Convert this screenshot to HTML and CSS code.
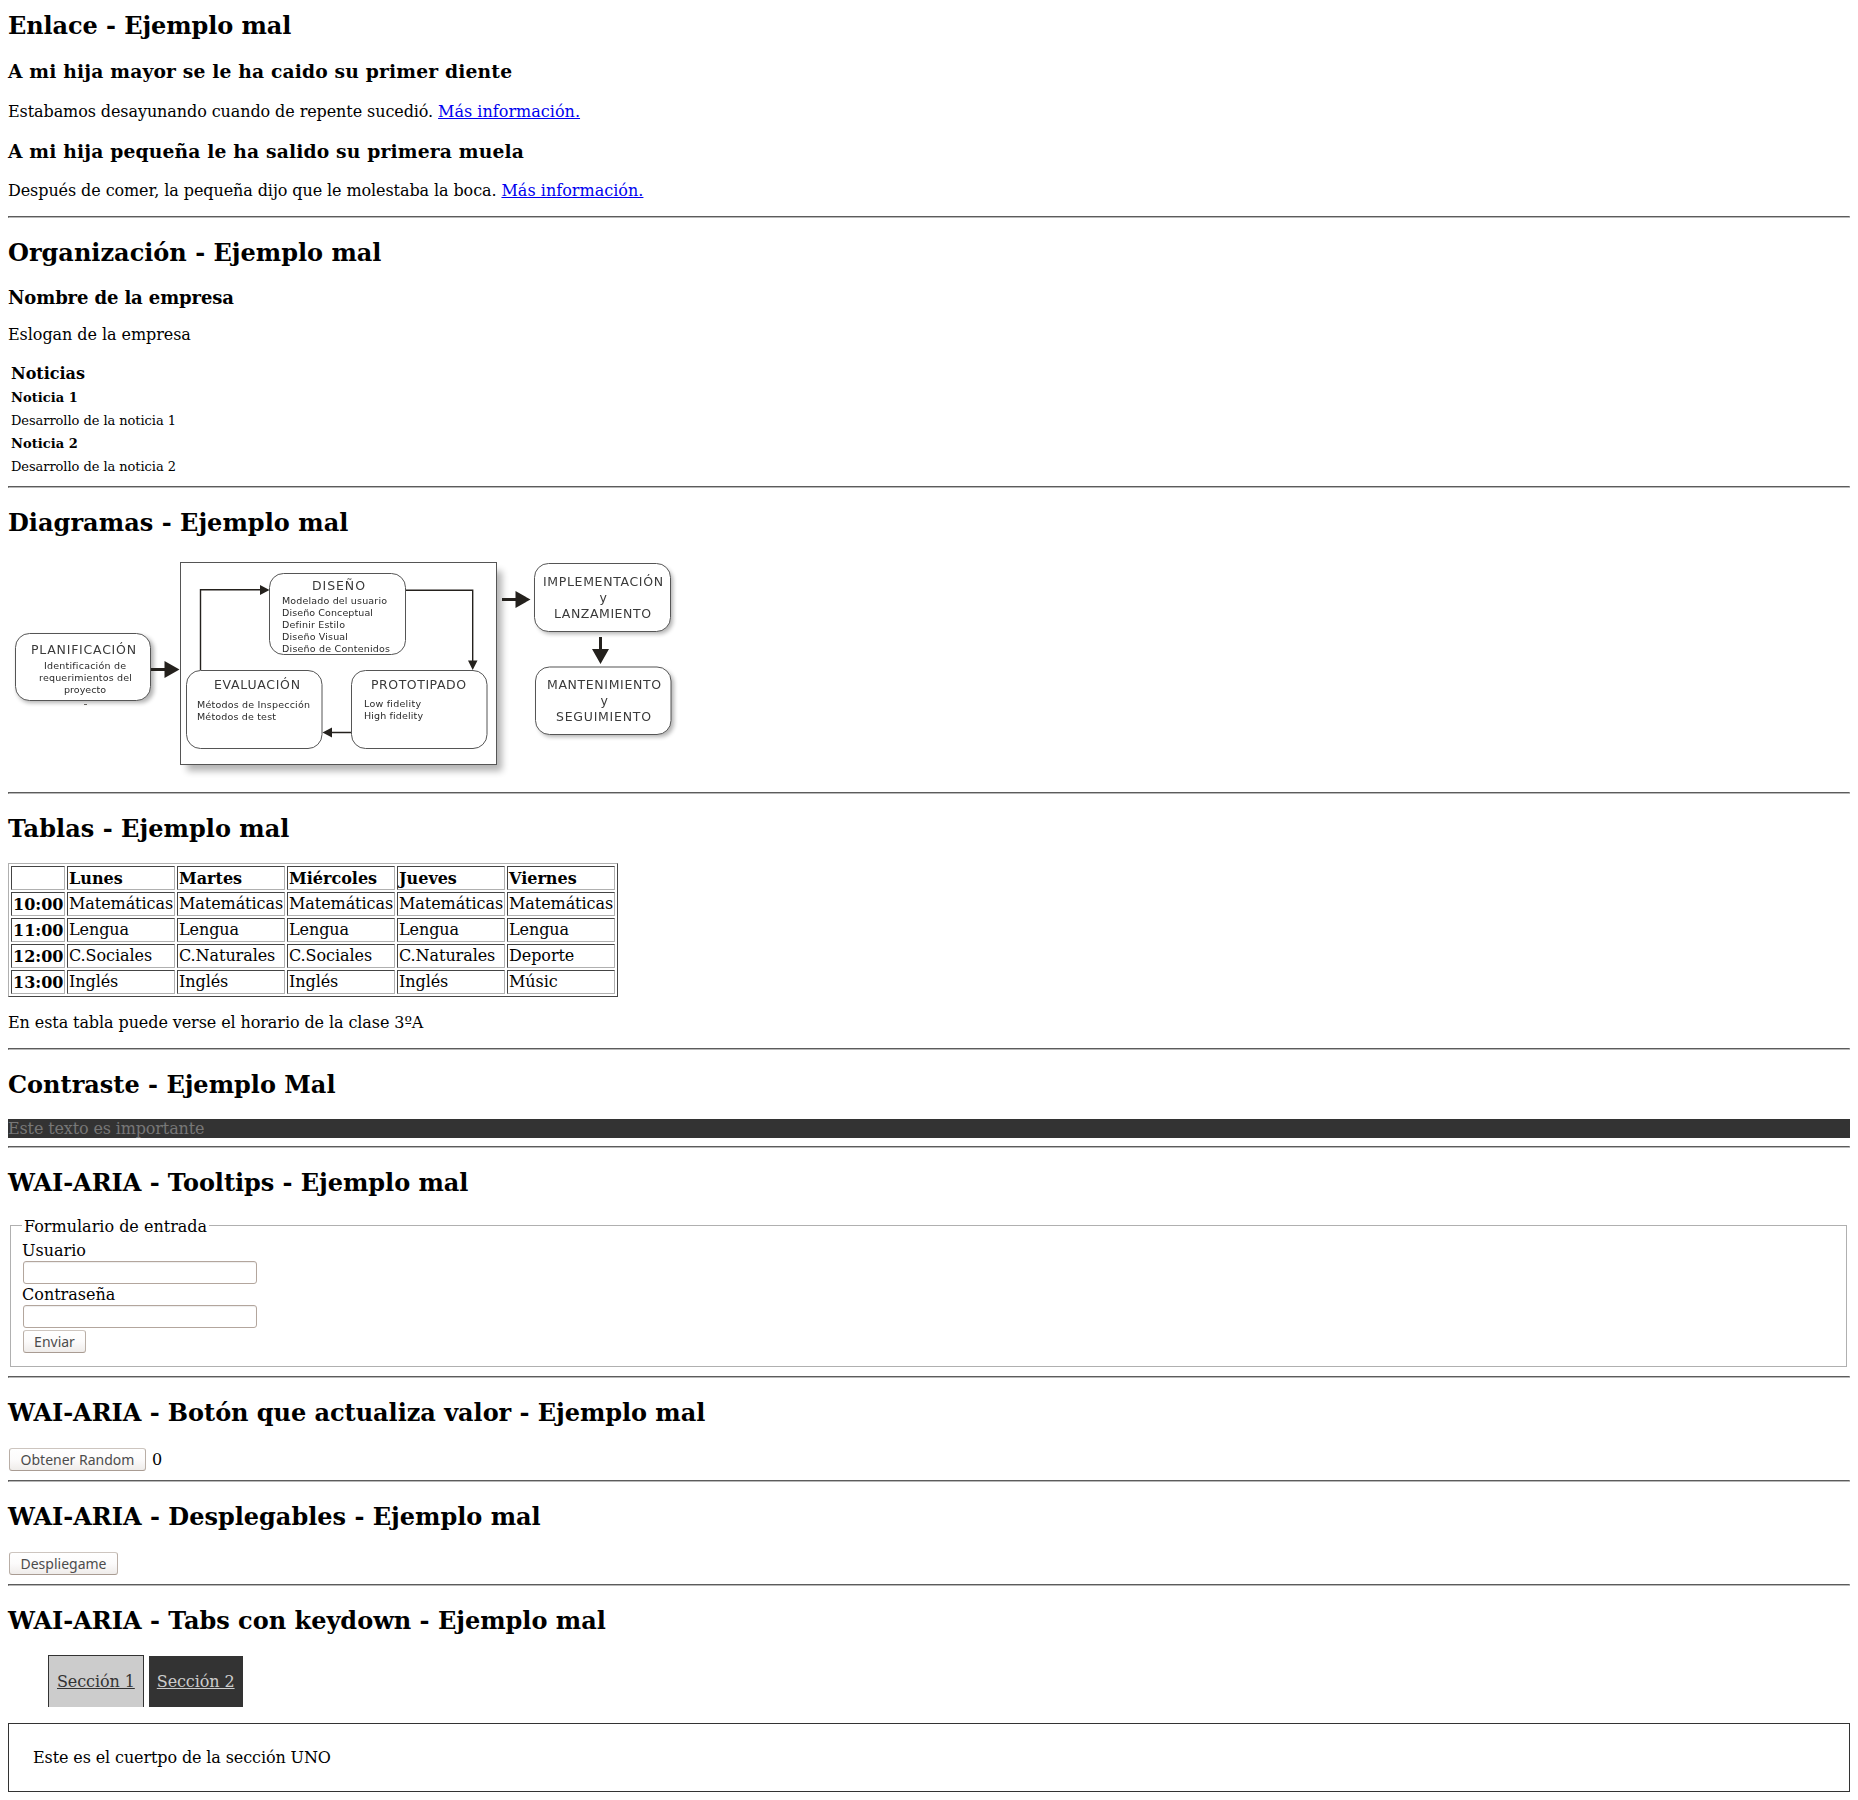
FILE: index.html
```html
<!DOCTYPE html>
<html lang="es">
<head>
<meta charset="utf-8">
<title>Ejemplos de accesibilidad</title>
<link rel="stylesheet" href="styles.css">
</head>
<body>
<section>
  <h2 class="tight">Enlace - Ejemplo mal</h2>
  <h3>A mi hija mayor se le ha caido su primer diente</h3>
  <p>Estabamos desayunando cuando de repente sucedió. <a href="#">Más información.</a></p>
  <h3>A mi hija pequeña le ha salido su primera muela</h3>
  <p>Después de comer, la pequeña dijo que le molestaba la boca. <a href="#">Más información.</a></p>
</section>
<hr>
<section>
  <h2>Organización - Ejemplo mal</h2>
  <p class="company">Nombre de la empresa</p>
  <p class="slogan">Eslogan de la empresa</p>
  <table class="news">
    <tr><td><b>Noticias</b></td></tr>
    <tr><td><b class="small">Noticia 1</b></td></tr>
    <tr><td><span class="small">Desarrollo de la noticia 1</span></td></tr>
    <tr><td><b class="small">Noticia 2</b></td></tr>
    <tr><td><span class="small">Desarrollo de la noticia 2</span></td></tr>
  </table>
</section>
<hr>
<section>
  <h2 class="loose">Diagramas - Ejemplo mal</h2>
  <svg class="diagram" width="680" height="227" viewBox="8 557 680 227">
    <defs>
      <filter id="soft" x="-20%" y="-20%" width="140%" height="140%"><feGaussianBlur stdDeviation="2.2"/></filter>
      <filter id="softer" x="-20%" y="-20%" width="140%" height="140%"><feGaussianBlur stdDeviation="3.5"/></filter>
    </defs>
    <g class="shadow">
      <rect x="187" y="571" width="315" height="200" filter="url(#softer)"/>
      <rect x="17" y="636" width="137" height="67" rx="14" filter="url(#soft)"/>
      <rect x="537" y="567" width="136" height="67" rx="14" filter="url(#soft)"/>
      <rect x="538" y="670" width="136" height="67" rx="14" filter="url(#soft)"/>
    </g>
    <g class="box">
      <rect x="180.500" y="562.500" width="316" height="202"/>
      <rect x="15.500" y="633.500" width="135" height="67" rx="14"/>
      <rect x="269.500" y="573.500" width="136" height="81" rx="14"/>
      <rect x="186.500" y="670.500" width="135.500" height="78" rx="14"/>
      <rect x="351.500" y="670.500" width="135.500" height="78" rx="14"/>
      <rect x="534.500" y="563.500" width="136" height="68" rx="14"/>
      <rect x="535.500" y="667" width="135.500" height="67.500" rx="14"/>
    </g>
    <g class="thick">
      <path d="M151 669.500H165M502 599.500H516M600.500 637V650"/>
    </g>
    <g class="thin">
      <path d="M200.500 670V589.700H261M406 590.200H472.700V662M351 732.500H331"/>
    </g>
    <g class="head">
      <path d="M164.500 661V678L179.500 669.500ZM515.500 591V608L530.500 599.500ZM592 649H609L600.500 664ZM260 585V595L269.500 590ZM468 660.500H477.500L472.700 670ZM332 727.500V737.500L322.500 732.500Z"/>
      <path d="M84 704h3v.7h-3z"/>
    </g>
    <g class="title">
      <text x="31" y="654" textLength="105">PLANIFICACIÓN</text>
      <text x="312" y="590" textLength="53">DISEÑO</text>
      <text x="214" y="689" textLength="86">EVALUACIÓN</text>
      <text x="371" y="689" textLength="95">PROTOTIPADO</text>
      <text x="543" y="586" textLength="120">IMPLEMENTACIÓN</text>
      <text x="599.500" y="602">y</text>
      <text x="554" y="618" textLength="97">LANZAMIENTO</text>
      <text x="547" y="689" textLength="114">MANTENIMIENTO</text>
      <text x="600.500" y="705">y</text>
      <text x="556" y="721" textLength="95">SEGUIMIENTO</text>
    </g>
    <g class="detail">
      <text x="44" y="669" textLength="82">Identificación de</text>
      <text x="39" y="681" textLength="93">requerimientos del</text>
      <text x="64" y="693" textLength="42">proyecto</text>
      <text x="282" y="604" textLength="105">Modelado del usuario</text>
      <text x="282" y="616" textLength="91">Diseño Conceptual</text>
      <text x="282" y="628" textLength="63">Definir Estilo</text>
      <text x="282" y="640" textLength="66">Diseño Visual</text>
      <text x="282" y="652" textLength="108">Diseño de Contenidos</text>
      <text x="197" y="708" textLength="113">Métodos de Inspección</text>
      <text x="197" y="720" textLength="79">Métodos de test</text>
      <text x="364" y="707" textLength="57">Low fidelity</text>
      <text x="364" y="719" textLength="59">High fidelity</text>
    </g>
  </svg>
</section>
<hr>
<section>
  <h2 class="loose">Tablas - Ejemplo mal</h2>
  <table class="schedule">
    <colgroup><col class="hour"><col span="5" class="day"></colgroup>
    <tr><th></th><th>Lunes</th><th>Martes</th><th>Miércoles</th><th>Jueves</th><th>Viernes</th></tr>
    <tr><th>10:00</th><td>Matemáticas</td><td>Matemáticas</td><td>Matemáticas</td><td>Matemáticas</td><td>Matemáticas</td></tr>
    <tr><th>11:00</th><td>Lengua</td><td>Lengua</td><td>Lengua</td><td>Lengua</td><td>Lengua</td></tr>
    <tr><th>12:00</th><td>C.Sociales</td><td>C.Naturales</td><td>C.Sociales</td><td>C.Naturales</td><td>Deporte</td></tr>
    <tr><th>13:00</th><td>Inglés</td><td>Inglés</td><td>Inglés</td><td>Inglés</td><td>Músic</td></tr>
  </table>
  <p>En esta tabla puede verse el horario de la clase 3ºA</p>
</section>
<hr>
<section>
  <h2>Contraste - Ejemplo Mal</h2>
  <div class="contrast">Este texto es importante</div>
</section>
<hr>
<section>
  <h2 class="snug">WAI-ARIA - Tooltips - Ejemplo mal</h2>
  <fieldset>
    <legend>Formulario de entrada</legend>
    <label for="user">Usuario</label>
    <input id="user" type="text">
    <label for="pass">Contraseña</label>
    <input id="pass" type="password">
    <button class="send">Enviar</button>
  </fieldset>
</section>
<hr>
<section>
  <h2 class="snug">WAI-ARIA - Botón que actualiza valor - Ejemplo mal</h2>
  <div class="row"><button class="random">Obtener Random</button><span>0</span></div>
</section>
<hr>
<section>
  <h2>WAI-ARIA - Desplegables - Ejemplo mal</h2>
  <div class="row"><button class="unfold">Despliegame</button></div>
</section>
<hr>
<section>
  <h2>WAI-ARIA - Tabs con keydown - Ejemplo mal</h2>
  <ul class="tabs">
    <li class="tab active"><a href="#">Sección 1</a></li>
    <li class="tab"><a href="#">Sección 2</a></li>
  </ul>
  <div class="panel">Este es el cuertpo de la sección UNO</div>
</section>
</body>
</html>
```
FILE: styles.css
```css
body {
  margin: 0;
  padding: 11px 8px 8px;
  background: #fff;
  color: #000;
  font: 16px/19px "DejaVu Serif", serif;
}
section { display: flow-root; }
h2 { margin: 0 0 20px; font-size: 24px; line-height: 29px; }
h3 { margin: 19px 0 19.5px; font-size: 18.72px; line-height: 22px; letter-spacing: .165px; }
p { margin: 16px 0; letter-spacing: -.09px; }
a { color: #00e; letter-spacing: .02px; }
hr {
  height: 0;
  margin: 0 0 20px;
  border: 1px solid;
  border-color: #5c5c5c #b8b8b8 #b8b8b8 #5c5c5c;
}
.tight { letter-spacing: -.08px; }
.snug { letter-spacing: -.04px; }
.loose { letter-spacing: .04px; }

.company { margin: 0 0 17px; font-size: 18px; line-height: 21px; font-weight: bold; letter-spacing: -.12px; }
.slogan { margin: 0 0 17px; letter-spacing: -.06px; }
.news { border-spacing: 2px; margin-bottom: 8px; }
.news td { padding: 1px; }
.small { font-size: 13px; line-height: 1; }
span.small { letter-spacing: -.06px; }
b.small { letter-spacing: .06px; }

.diagram { display: block; margin-bottom: 8px; font-family: "DejaVu Sans", sans-serif; }
.shadow { fill: #000; opacity: .3; }
.box { fill: #fff; stroke: #555; stroke-width: 1; }
.thick { fill: none; stroke: #24211d; stroke-width: 3; }
.thin { fill: none; stroke: #24211d; stroke-width: 1.4; }
.head { fill: #24211d; }
.title { font-size: 12.5px; fill: #3a3a3a; }
.detail { font-size: 9.5px; fill: #2a2a2a; }

.schedule {
  table-layout: fixed;
  width: 610px;
  border: 1px solid;
  border-color: #b0b0b0 #444 #444 #b0b0b0;
  border-spacing: 2px;
}
.hour { width: 54px; }
.day { width: 108px; }
.schedule th, .schedule td {
  box-sizing: border-box;
  height: 24px;
  border: 1px solid;
  border-color: #444 #b0b0b0 #b0b0b0 #444;
  text-align: left;
  vertical-align: top;
  white-space: nowrap;
}
.schedule th { padding: 2px 1px 1px; }
.schedule td { padding: 1px 1px 2px; letter-spacing: -.07px; }

.contrast { margin-bottom: 8px; background: #333; color: #777; letter-spacing: -.14px; }

fieldset {
  display: block;
  margin: 0 3px 9px 2px;
  padding: 7px 11px 12px;
  border: 1px solid #b0b0b0;
}
legend { padding: 2px 2px 0; line-height: 15px; }
label { display: block; }
input {
  display: block;
  box-sizing: border-box;
  width: 234px;
  height: 23px;
  margin: 1px;
  border: 1px solid #b3a69d;
  border-radius: 3px;
  background: #fff;
  box-shadow: inset 0 1px 1px #eee;
}
button {
  display: block;
  box-sizing: border-box;
  height: 23px;
  margin: 1px;
  padding: 0;
  border: 1px solid #b9aea6;
  border-top-color: #cdc5bf;
  border-bottom-color: #a99c93;
  border-radius: 3px;
  background: linear-gradient(#fff, #fcfbfb 50%, #efecea);
  color: #4c4c4c;
  font: 14px/20px "Noto Sans", sans-serif;
  white-space: nowrap;
}
.send { width: 63px; margin-top: 2px; }
.random { width: 137px; }
.unfold { width: 109px; }
.row { display: flex; gap: 5px; height: 25px; margin-bottom: 8px; }
.row span { padding-top: 3px; }

.tabs {
  display: flex;
  align-items: flex-end;
  gap: 5px;
  margin: 0 0 16px;
  padding: 0 0 0 40px;
  list-style: none;
}
.tab { padding: 16px 8px; background: #333; }
.tab a { color: #ccc; letter-spacing: -.1px; }
.active { border: 1px solid #333; border-bottom: 0; background: #ccc; }
.active a { color: #333; }
.panel { padding: 24px; border: 1px solid #333; letter-spacing: -.115px; }
```
